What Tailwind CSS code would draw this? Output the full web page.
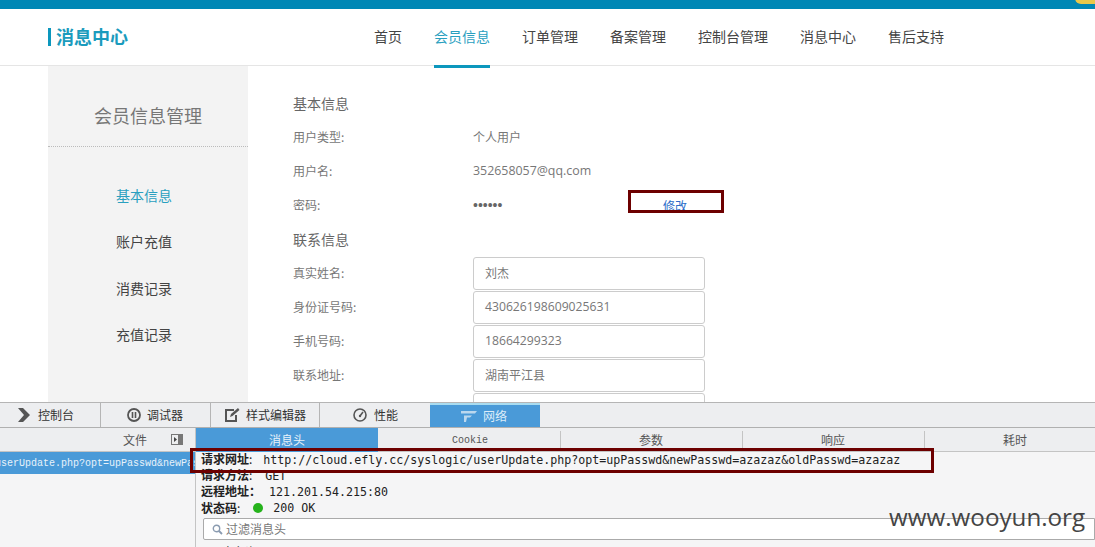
<!doctype html>
<html>
<head>
<meta charset="utf-8">
<title>消息中心</title>
<script src="https://cdn.jsdelivr.net/npm/@tailwindcss/browser@4"></script>
</head>
<body class="bg-white">
<div class="relative w-[1095px] h-[547px] overflow-hidden flex flex-col font-['Noto_Sans_CJK_SC',sans-serif] text-[12px] text-[#777]">

  <!-- top bar -->
  <div class="h-[9px] shrink-0 bg-[#0087b5]"></div>

  <!-- header -->
  <div class="relative z-10 h-[57px] shrink-0 border-b border-[#e5e5e5] bg-white flex pl-[48px]">
    <div class="w-[326px] flex items-center h-[55px]">
      <div class="w-[3px] h-[18px] bg-[#0c97bd] mr-[5px]"></div>
      <span class="text-[18px] font-bold text-[#1a9bbd]">消息中心</span>
    </div>
    <div class="flex gap-[32px] text-[14px] text-[#444] leading-[54px]">
      <a>首页</a>
      <a class="h-[59px] border-b-[3px] border-[#0c97bd] text-[#2aa0bf]">会员信息</a>
      <a>订单管理</a>
      <a>备案管理</a>
      <a>控制台管理</a>
      <a>消息中心</a>
      <a>售后支持</a>
    </div>
  </div>

  <!-- page -->
  <div class="flex-1 min-h-0 overflow-hidden flex pl-[48px]">
    <div class="w-[200px] shrink-0 bg-[#f3f3f3]">
      <div class="pt-[35px] pb-[17px] text-center text-[18px] leading-[28px] text-[#777] border-b border-dotted border-[#bbb]">会员信息管理</div>
      <div class="pt-[25px] pr-[8px] text-center text-[14px] leading-[46.4px] text-[#444]">
        <div class="text-[#2aa0bf]">基本信息</div>
        <div>账户充值</div>
        <div>消费记录</div>
        <div>充值记录</div>
      </div>
    </div>
    <div class="pl-[45px] pt-[21px]">
      <div class="h-[33px] leading-[32px] text-[14px] text-[#666]">基本信息</div>
      <div class="h-[34px] flex items-center"><span class="w-[180px]">用户类型:</span><span>个人用户</span></div>
      <div class="h-[34px] flex items-center"><span class="w-[180px]">用户名:</span><span class="font-['Open_Sans',sans-serif] text-[12.4px]">352658057@qq.com</span></div>
      <div class="h-[34px] flex items-center"><span class="w-[180px]">密码:</span><span class="w-[190px] font-['Liberation_Sans',sans-serif] text-[14px] text-[#666]">••••••</span><a class="text-[#2a6bc8] pt-px">修改</a></div>
      <div class="h-[35px] leading-[35px] text-[14px] text-[#666]">联系信息</div>
      <div class="h-[34px] flex"><span class="w-[180px] leading-[31px]">真实姓名:</span><div class="w-[232px] h-[33px] px-[11px] leading-[30px] border border-[#ccc] rounded-[3px]">刘杰</div></div>
      <div class="h-[34px] flex"><span class="w-[180px] leading-[31px]">身份证号码:</span><div class="w-[232px] h-[33px] px-[11px] leading-[30px] border border-[#ccc] rounded-[3px] font-['Open_Sans',sans-serif] text-[12.2px]">430626198609025631</div></div>
      <div class="h-[34px] flex"><span class="w-[180px] leading-[31px]">手机号码:</span><div class="w-[232px] h-[33px] px-[11px] leading-[30px] border border-[#ccc] rounded-[3px] font-['Open_Sans',sans-serif] text-[12.2px]">18664299323</div></div>
      <div class="h-[34px] flex"><span class="w-[180px] leading-[31px]">联系地址:</span><div class="w-[232px] h-[33px] px-[11px] leading-[30px] border border-[#ccc] rounded-[3px]">湖南平江县</div></div>
      <div class="h-[34px] flex"><span class="w-[180px]"></span><div class="w-[232px] h-[33px] border border-[#ccc] rounded-[3px]"></div></div>
    </div>
  </div>

  <!-- devtools -->
  <div class="h-[145px] shrink-0 border-t border-[#b5b5b5] bg-[#f5f5f6] text-[#333] flex flex-col overflow-hidden">
    <div class="h-[25px] shrink-0 flex bg-[#edeef0] border-b border-[#b0b0b0]">
      <div class="w-[101px] border-r border-[#b5b5b5] flex items-center pl-[18px] gap-[8px]">
        <svg width="12" height="14" viewBox="0 0 12 14"><path d="M0 0h5l7 7-7 7H0l6-7z" fill="#555"/></svg>
        <span>控制台</span>
      </div>
      <div class="w-[110px] border-r border-[#b5b5b5] flex items-center pl-[26px] gap-[6px]">
        <svg width="14" height="14" viewBox="0 0 14 14"><circle cx="7" cy="7" r="6" fill="none" stroke="#555" stroke-width="1.8"/><path d="M5.500 4v6M8.500 4v6" stroke="#555" stroke-width="1.6"/></svg>
        <span>调试器</span>
      </div>
      <div class="w-[109px] border-r border-[#b5b5b5] flex items-center pl-[13px] gap-[6px]">
        <svg width="16" height="16" viewBox="0 0 16 16"><path d="M1 2h9v2H3v9h8V8h2v7H1z" fill="#555"/><path d="M6 10l1-3 7-6 1.500 2-7 6z" fill="#555"/></svg>
        <span>样式编辑器</span>
      </div>
      <div class="w-[110px] flex items-center pl-[33px] gap-[7px]">
        <svg width="14" height="14" viewBox="0 0 14 14"><circle cx="7" cy="7" r="6" fill="none" stroke="#555" stroke-width="1.6"/><path d="M7 8l3-4" stroke="#555" stroke-width="1.6"/><circle cx="7" cy="8" r="1.200" fill="#555"/></svg>
        <span>性能</span>
      </div>
      <div class="w-[110px] bg-[#4a9ad8] border-t-2 border-[#a9dcf0] flex items-center pl-[31px] gap-[6px] text-[#dcecf8]">
        <svg width="16" height="12" viewBox="0 0 16 12"><path d="M0 1h16l-2 2.500H0zM3 5.500h8L9 7.500H6l-1 4.500H3z" fill="#bcd8ee"/></svg>
        <span>网络</span>
      </div>
    </div>
    <div class="flex-1 min-h-0 flex">
      <div class="w-[196px] shrink-0 border-r border-[#c4c4c4]">
        <div class="h-[24px] bg-[#edeef0] border-b border-[#c4c4c4] flex items-center justify-end pr-[12px] gap-[24px] text-[#555]">
          <span>文件</span>
          <svg width="12" height="11" viewBox="0 0 12 11"><rect x="0.500" y="0.500" width="11" height="10" fill="none" stroke="#777"/><rect x="7" y="1" width="4" height="9" fill="#777"/><path d="M3 3l3 2.500L3 8z" fill="#444"/></svg>
        </div>
        <div class="h-[22px] pt-px bg-[#4a9ad8] text-[#e8f2fa] font-['Liberation_Mono',monospace] text-[10px] leading-[22px] whitespace-nowrap overflow-hidden"><span class="ml-[-5px] inline-block">userUpdate.php?opt=upPasswd&amp;newPasswd=azazaz</span></div>
      </div>
      <div class="flex-1 min-w-0 flex flex-col overflow-hidden">
        <div class="h-[24px] shrink-0 flex bg-[#edeef0] border-b border-[#c4c4c4] text-[#555]">
          <div class="w-[182px] shrink-0 -mb-px bg-[#4a9ad8] text-[#e8f2fa] flex items-center justify-center">消息头</div>
          <div class="w-[182px] shrink-0 pt-[2px] pl-[2px] flex items-center justify-center font-['Liberation_Mono',monospace] text-[10px]">Cookie</div>
          <div class="w-[182px] shrink-0 relative flex items-center justify-center"><span class="absolute left-0 top-[3px] bottom-0 w-px bg-[#c4c4c4]"></span>参数</div>
          <div class="w-[182px] shrink-0 relative flex items-center justify-center"><span class="absolute left-0 top-[3px] bottom-0 w-px bg-[#c4c4c4]"></span>响应</div>
          <div class="w-[182px] shrink-0 relative flex items-center justify-center"><span class="absolute left-0 top-[3px] bottom-0 w-px bg-[#c4c4c4]"></span>耗时</div>
        </div>
        <div class="pl-[5px] -mt-px leading-[16px] text-[#222]">
          <div class="h-[16px] whitespace-nowrap"><b>请求网址</b>:<span class="ml-[11px] font-['DejaVu_Sans_Mono',monospace] text-[11.63px]">http://cloud.efly.cc/syslogic/userUpdate.php?opt=upPasswd&amp;newPasswd=azazaz&amp;oldPasswd=azazaz</span></div>
          <div class="h-[16px]"><b>请求方法</b>:<span class="ml-[13px] font-['DejaVu_Sans_Mono',monospace] text-[11.63px]">GET</span></div>
          <div class="h-[16px]"><b>远程地址：</b><span class="ml-[8px] font-['DejaVu_Sans_Mono',monospace] text-[11.63px]">121.201.54.215:80</span></div>
          <div class="h-[16px] mt-px flex items-center"><b>状态码</b>:<span class="ml-[13px] w-[10px] h-[10px] rounded-full bg-[#26b31c]"></span><span class="ml-[10px] font-['DejaVu_Sans_Mono',monospace] text-[11.63px]">200 OK</span></div>
        </div>
        <div class="mt-[2px] ml-[7px] h-[22px] shrink-0 bg-white border border-[#aaa] rounded-l-[2px] flex items-center pl-[8px] gap-[3px] text-[#777]">
          <svg width="11" height="11" viewBox="0 0 11 11"><circle cx="4.500" cy="4.500" r="3.200" fill="none" stroke="#8a9bb0" stroke-width="1.400"/><path d="M7 7l3 3" stroke="#8a9bb0" stroke-width="1.800"/></svg>
          <span>过滤消息头</span>
        </div>
        <div class="pl-[24px] pt-[3px] text-[#333]">响应头</div>
      </div>
    </div>
  </div>

  <!-- overlays: annotations drawn on the screenshot -->
  <div class="absolute left-[1075px] top-[-8px] w-[30px] h-[12px] rounded-full bg-[#e8c84a]"></div>
  <div class="absolute left-[628px] top-[190px] w-[96px] h-[23px] border-[3px] border-[#6d0000]"></div>
  <div class="absolute left-[190px] top-[448px] w-[744px] h-[25px] border-[3px] border-[#6d0000]"></div>
  <div class="absolute left-[889px] top-[500px] font-['Open_Sans',sans-serif] text-[24.2px] leading-[34px] text-[#444]">www.wooyun.org</div>
</div>
</body>
</html>
